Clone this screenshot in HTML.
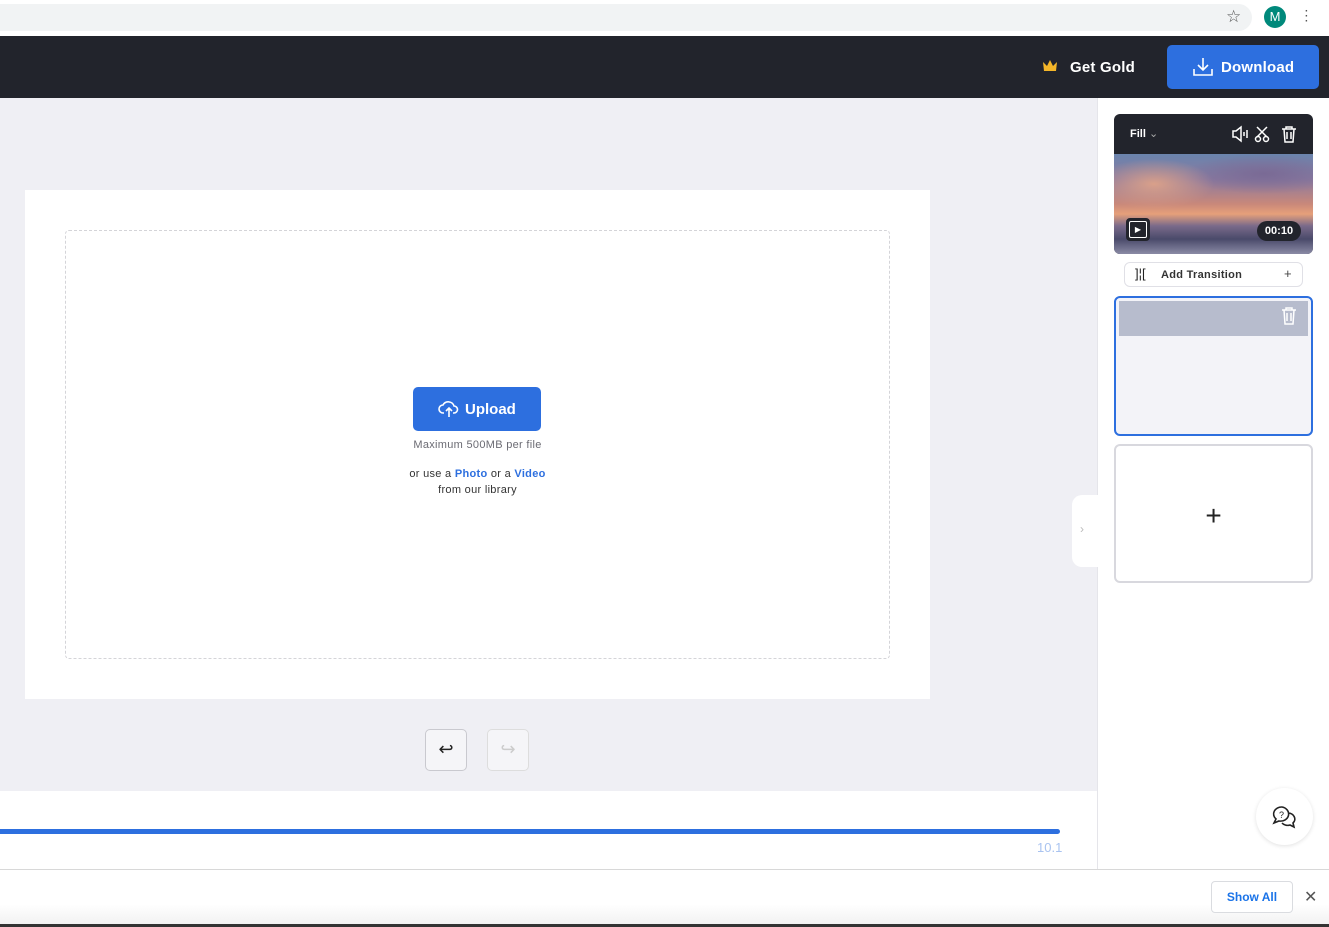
<!DOCTYPE html>
<html><head><style>
*{box-sizing:border-box;margin:0;padding:0}
body{width:1329px;height:927px;overflow:hidden;font-family:"Liberation Sans",sans-serif;background:#fff;position:relative}
.abs{position:absolute}
</style></head><body>
<div class="abs" style="left:0;top:0;width:1329px;height:36px;background:#fff"></div>
<div class="abs" style="left:0;top:4px;width:1252px;height:27px;background:#f1f3f4;border-radius:0 14px 14px 0"></div>
<div class="abs" style="left:1226px;top:7px;font-size:17px;color:#555">☆</div>
<div class="abs" style="left:1264px;top:6px;width:22px;height:22px;border-radius:50%;background:#00897b;color:#fff;font-size:13px;text-align:center;line-height:22px">M</div>
<div class="abs" style="left:1305px;top:9px;width:4px;font-size:10px;line-height:5px;color:#555;font-weight:bold">·<br>·<br>·</div>
<div class="abs" style="left:0;top:36px;width:1329px;height:62px;background:#22242c"></div>
<svg class="abs" style="left:1042px;top:58px" width="16" height="16" viewBox="0 0 16 16"><path d="M1 4l4 4 3-6 3 6 4-4-1 9H2z" fill="#f5b629"/></svg>
<div class="abs" style="left:1070px;top:59px;color:#fff;font-size:15px;font-weight:bold;letter-spacing:.2px">Get Gold</div>
<div class="abs" style="left:1167px;top:45px;width:152px;height:44px;background:#2d6fdf;border-radius:5px"></div>
<svg class="abs" style="left:1192px;top:57px" width="22" height="20" viewBox="0 0 22 20" fill="none" stroke="#fff" stroke-width="1.6"><path d="M11 1v12M6 8l5 5 5-5M2 12v6h18v-6"/></svg>
<div class="abs" style="left:1221px;top:59px;color:#fff;font-size:15px;font-weight:bold;letter-spacing:.2px">Download</div>
<div class="abs" style="left:0;top:98px;width:1098px;height:693px;background:#efeff4"></div>
<div class="abs" style="left:25px;top:190px;width:905px;height:509px;background:#fff"></div>
<div class="abs" style="left:65px;top:230px;width:825px;height:429px;border:1px dashed #d4d4d8;border-radius:4px"></div>
<div class="abs" style="left:413px;top:387px;width:128px;height:44px;background:#2d6fdf;border-radius:5px"></div>
<svg class="abs" style="left:438px;top:399px" width="22" height="20" viewBox="0 0 22 20" fill="none" stroke="#fff" stroke-width="1.6"><path d="M6 14H5a4 4 0 010-8 6 6 0 0111 1 3.5 3.5 0 010 7h-1M11 18V9M8 12l3-3 3 3"/></svg>
<div class="abs" style="left:465px;top:401px;color:#fff;font-size:15px;font-weight:bold">Upload</div>
<div class="abs" style="left:370px;top:439px;width:215px;text-align:center;color:#6b6b73;font-size:11px;letter-spacing:.3px">Maximum 500MB per file</div>
<div class="abs" style="left:370px;top:466px;width:215px;text-align:center;color:#333;font-size:11px;line-height:16px;letter-spacing:.3px">or use a <b style="color:#2d6fdf">Photo</b> or a <b style="color:#2d6fdf">Video</b><br>from our library</div>
<div class="abs" style="left:425px;top:729px;width:42px;height:42px;border:1px solid #c9c9cf;border-radius:5px;background:#f5f5f8;text-align:center;line-height:38px;font-size:18px;color:#222">↩</div>
<div class="abs" style="left:487px;top:729px;width:42px;height:42px;border:1px solid #ddd;border-radius:5px;background:#f5f5f8;text-align:center;line-height:38px;font-size:18px;color:#ccc">↪</div>
<div class="abs" style="left:0;top:791px;width:1098px;height:78px;background:#fff"></div>
<div class="abs" style="left:0;top:829px;width:1060px;height:5px;background:#2d6fdf;border-radius:0 3px 3px 0"></div>
<div class="abs" style="left:1037px;top:840px;color:#a9c3f0;font-size:13px">10.1</div>
<div class="abs" style="left:1097px;top:98px;width:1px;height:771px;background:#e5e5ea"></div>
<div class="abs" style="left:1072px;top:495px;width:26px;height:72px;background:#fff;border-radius:10px 0 0 10px"></div>
<div class="abs" style="left:1080px;top:522px;color:#bbb;font-size:12px">›</div>
<div class="abs" style="left:1114px;top:114px;width:199px;height:140px;background:#22242c;border-radius:6px;overflow:hidden">
<div style="position:absolute;top:40px;left:0;width:199px;height:100px;background:radial-gradient(ellipse 60px 25px at 40px 30px,#d9a08a,transparent),radial-gradient(ellipse 80px 20px at 150px 20px,#7a6a95,transparent),linear-gradient(180deg,#6a84ad 0%,#8a7aa0 25%,#c9887a 50%,#e6a07a 60%,#7a6a8a 72%,#4a4a6a 85%,#8a8aa5 100%)"></div>
</div>
<div class="abs" style="left:1130px;top:127px;color:#fff;font-size:11px;font-weight:bold">Fill <span style="font-weight:normal;color:#aaa">⌄</span></div>
<svg class="abs" style="left:1230px;top:124px" width="72" height="20" viewBox="0 0 72 20" fill="none" stroke="#fff" stroke-width="1.5"><path d="M3 7h3l5-4v14l-5-4H3zM14 8v4M17 6v8M27 3l10 10M37 3l-10 10"/><circle cx="28" cy="15" r="2.5"/><circle cx="36" cy="15" r="2.5"/><path d="M52 5h14M56 5V3h6v2M54 5l1 13h8l1-13M57 8v7M61 8v7"/></svg>
<div class="abs" style="left:1126px;top:218px;width:24px;height:23px;background:#22242c;border-radius:4px;border:2px solid #22242c"><div style="border:1.5px solid #fff;border-radius:2px;width:18px;height:17px;margin:1px;color:#fff;font-size:8px;text-align:center;line-height:15px">▶</div></div>
<div class="abs" style="left:1257px;top:221px;width:44px;height:20px;background:#22242c;border-radius:10px;color:#fff;font-size:11px;font-weight:bold;text-align:center;line-height:20px">00:10</div>
<div class="abs" style="left:1124px;top:262px;width:179px;height:25px;border:1px solid #e0e0e6;border-radius:6px;background:#fff"></div>
<div class="abs" style="left:1135px;top:266px;font-size:13px;color:#222">]¦[</div>
<div class="abs" style="left:1161px;top:269px;font-size:11px;color:#333;font-weight:bold;letter-spacing:.3px">Add Transition</div>
<div class="abs" style="left:1284px;top:266px;font-size:13px;color:#444">+</div>
<div class="abs" style="left:1114px;top:296px;width:199px;height:140px;border:2px solid #2d6fdf;border-radius:6px;background:#f3f3f8;overflow:hidden"><div style="margin:3px;height:35px;background:#b7bccd"></div></div>
<svg class="abs" style="left:1280px;top:306px" width="18" height="20" viewBox="0 0 18 20" fill="none" stroke="#fff" stroke-width="1.5"><path d="M2 4h14M6 4V2h6v2M4 4l1 14h8l1-14M7 7v8M11 7v8"/></svg>
<div class="abs" style="left:1114px;top:444px;width:199px;height:139px;border:2px solid #d8d8de;border-radius:6px;background:#fff;text-align:center;line-height:140px;font-size:28px;color:#222">+</div>
<div class="abs" style="left:1256px;top:788px;width:57px;height:57px;border-radius:50%;background:#fff;box-shadow:0 1px 4px rgba(0,0,0,.12)"></div>
<svg class="abs" style="left:1272px;top:805px" width="26" height="24" viewBox="0 0 26 24" fill="none" stroke="#222" stroke-width="1.6"><path d="M10 2a8 7 0 00-6 12l-2 4 5-2a8 7 0 103-14zM16 8a7 6 0 015 10l1 4-4-2a7 6 0 01-8-2"/><text x="7" y="13" font-size="9" fill="#222" stroke="none" font-family="Liberation Sans">?</text></svg>
<div class="abs" style="left:0;top:869px;width:1329px;height:58px;background:linear-gradient(#fff,#fff 60%,#f0f0f0);border-top:1px solid #d8d8d8"></div>
<div class="abs" style="left:1211px;top:881px;width:82px;height:32px;border:1px solid #dadce0;border-radius:4px;background:#fff;color:#1a73e8;font-size:12px;text-align:center;line-height:30px;font-weight:bold">Show All</div>
<div class="abs" style="left:1304px;top:887px;font-size:16px;color:#555">✕</div>
<div class="abs" style="left:0;top:924px;width:1329px;height:3px;background:#333"></div>
</body></html>
